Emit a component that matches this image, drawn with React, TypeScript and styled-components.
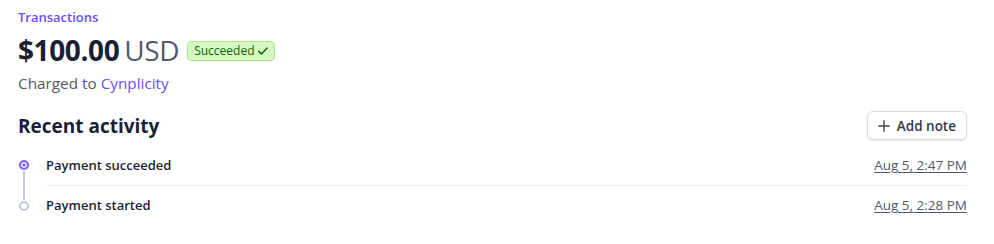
import styled, { createGlobalStyle } from "styled-components";

const Global = createGlobalStyle`
  body {
    margin: 0;
    background: #ffffff;
    font-family: "Open Sans", "Noto Sans", Arial, sans-serif;
    color: #353a44;
  }
`;

const Page = styled.div`
  padding: 8px 27px 0 18px;
`;

const Crumb = styled.a`
  display: block;
  color: #6e4cff;
  font-size: 13px;
  font-weight: 600;
  line-height: 18px;
  text-decoration: none;
`;

const AmountRow = styled.div`
  display: flex;
  align-items: center;
  gap: 8px;
  margin-top: 8px;
`;

const Amount = styled.h1`
  margin: 0;
  font-size: 28px;
  line-height: 32px;
  font-weight: 700;
  color: #1a1f36;
  letter-spacing: -0.4px;
  span {
    font-weight: 400;
    color: #545969;
    margin-left: 5px;
  }
`;

const Badge = styled.span`
  display: inline-flex;
  align-items: center;
  gap: 3px;
  height: 20px;
  box-sizing: border-box;
  padding: 0 5px 0 6px;
  border: 1px solid #a6eb84;
  border-radius: 4px;
  background: #d7f7c2;
  color: #05690d;
  font-size: 12px;
  margin-top: 1px;
`;

const Charged = styled.p`
  margin: 7px 0 0;
  font-size: 15.3px;
  line-height: 20px;
  color: #545969;
  a {
    color: #6e4cff;
    text-decoration: none;
  }
`;

const Header = styled.div`
  display: flex;
  align-items: center;
  justify-content: space-between;
  margin-top: 18px;
`;

const Title = styled.h2`
  margin: 0;
  font-size: 19px;
  font-weight: 700;
  color: #1a1f36;
`;

const Button = styled.button`
  display: inline-flex;
  align-items: center;
  gap: 6px;
  height: 29px;
  padding: 0 10px 0 9px;
  border: 1px solid #d8dbe2;
  border-radius: 6px;
  background: #fff;
  box-shadow: 0 1px 2px rgba(0, 0, 0, 0.12);
  font-family: inherit;
  font-size: 13.5px;
  font-weight: 600;
  color: #353a44;
`;

const List = styled.ul`
  list-style: none;
  margin: 5px 0 0;
  padding: 0;
`;

const Item = styled.li`
  display: grid;
  grid-template-columns: 28px 1fr;
`;

const Rail = styled.div<{ $last?: boolean }>`
  display: flex;
  flex-direction: column;
  align-items: center;
  width: 12px;
  padding-top: 15px;
  &::after {
    content: "";
    display: ${(p) => (p.$last ? "none" : "block")};
    flex: 1;
    width: 2px;
    background: #c1c9dc;
    margin-top: 1px;
    margin-bottom: -14px;
  }
`;

const Dot = styled.span<{ $active?: boolean }>`
  width: 10px;
  height: 10px;
  box-sizing: border-box;
  border-radius: 50%;
  border: 2px solid ${(p) => (p.$active ? "#7e62ff" : "#c1c9dc")};
  background: ${(p) => (p.$active ? "#6e4cff" : "#fff")};
  box-shadow: ${(p) => (p.$active ? "inset 0 0 0 1.5px #fff" : "none")};
`;

const Row = styled.div<{ $divider?: boolean }>`
  display: flex;
  align-items: center;
  justify-content: space-between;
  height: ${(p) => (p.$divider ? "40px" : "38px")};
  border-bottom: ${(p) => (p.$divider ? "1px solid #ebeef1" : "none")};
  font-size: 13px;
`;

const Event = styled.span`
  font-weight: 600;
  color: #1a1f36;
`;

const Time = styled.a`
  color: #545969;
  font-size: 13.5px;
  text-decoration: underline;
  text-underline-offset: 2px;
`;

const events = [
  { label: "Payment succeeded", time: "Aug 5, 2:47 PM", active: true },
  { label: "Payment started", time: "Aug 5, 2:28 PM", active: false },
];

export default function App() {
  return (
    <Page>
      <Global />
      <Crumb href="#">Transactions</Crumb>
      <AmountRow>
        <Amount>
          $100.00<span>USD</span>
        </Amount>
        <Badge>
          Succeeded
          <svg width="12" height="12" viewBox="0 0 16 16" fill="none">
            <path d="M2.5 8.5l3.5 3.5 7.5-8" stroke="#05690d" strokeWidth="2" strokeLinecap="round" strokeLinejoin="round" />
          </svg>
        </Badge>
      </AmountRow>
      <Charged>
        Charged to <a href="#">Cynplicity</a>
      </Charged>
      <Header>
        <Title>Recent activity</Title>
        <Button>
          <svg width="14" height="14" viewBox="0 0 16 16" fill="none">
            <path d="M8 2v12M2 8h12" stroke="#414552" strokeWidth="1.6" strokeLinecap="round" />
          </svg>
          Add note
        </Button>
      </Header>
      <List>
        {events.map((e, i) => (
          <Item key={e.label}>
            <Rail $last={i === events.length - 1}>
              <Dot $active={e.active} />
            </Rail>
            <Row $divider={i < events.length - 1}>
              <Event>{e.label}</Event>
              <Time href="#">{e.time}</Time>
            </Row>
          </Item>
        ))}
      </List>
    </Page>
  );
}
